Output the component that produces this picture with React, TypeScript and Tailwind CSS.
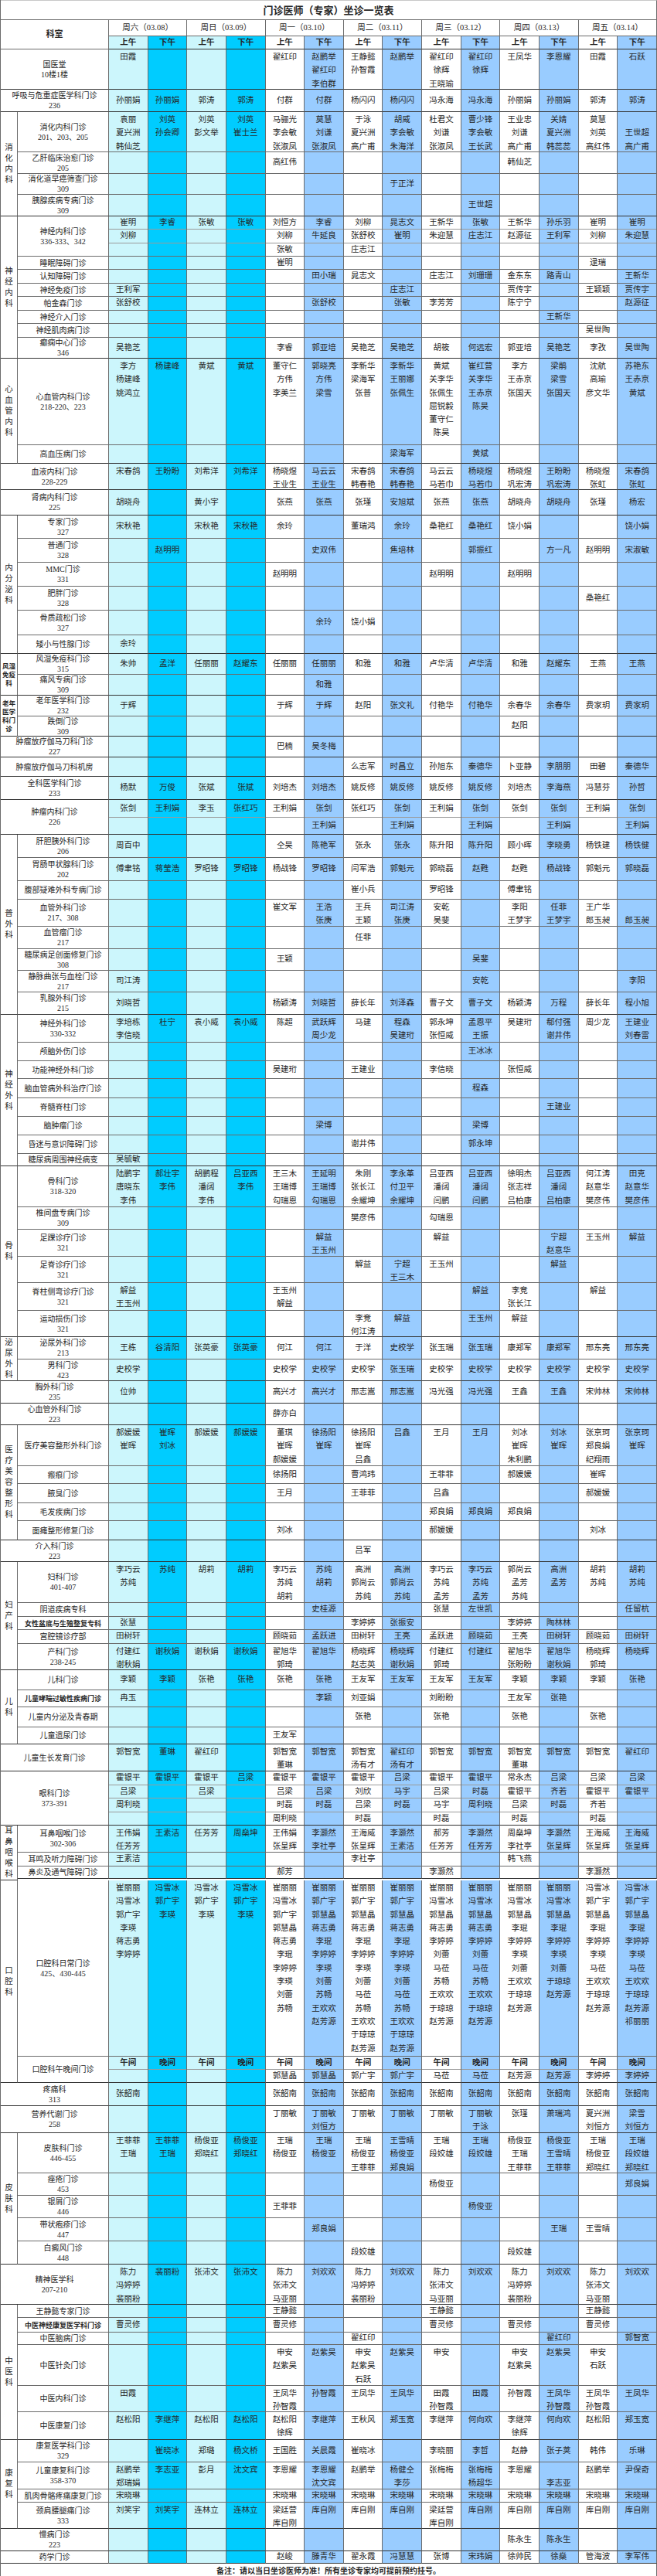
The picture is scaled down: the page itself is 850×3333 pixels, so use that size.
import React from "react"

type Row = { label: string; h: number; cells: string; split?: number; sans?: boolean; noon?: boolean }
type Section = { group?: string; gsans?: boolean; rows: Row[] }

// 周六、周日用青色，工作日下午用浅蓝
const bg = (i: number) => {
  if (i < 4) return i % 2 === 0 ? "bg-[#ccf6fc]" : "bg-[#00ccff]"
  return i % 2 === 0 ? "bg-white" : "bg-[#99ccff]"
}

const DAYS = ["周六（03.08）", "周日（03.09）", "周一（03.10）", "周二（03.11）", "周三（03.12）", "周四（03.13）", "周五（03.14）"]

const DATA: Section[] = [
  { rows: [{ label: "国医堂\n10楼1楼", h: 52, cells: "田霞||||翟红印|赵鹏举/翟红印/李伯群|王静懿/孙智霞|赵鹏举|翟红印/徐辉/王晓瑜|翟红印/徐辉|王凤华|李恩耀|田霞|石跃" }] },
  { rows: [{ label: "呼吸与危重症医学科门诊\n236", h: 29, cells: "孙丽娟|孙丽娟|郭涛|郭涛|付群|付群|杨闪闪|杨闪闪|冯永海|冯永海|孙丽娟|孙丽娟|郭涛|郭涛" }] },
  {
    group: "消化内科",
    rows: [
      { label: "消化内科门诊\n201、203、205", h: 52, cells: "袁丽/夏兴洲/韩仙芝|刘英/孙会卿|刘英/彭文举|刘英/崔士兰|马骊光/李会敏/张淑凤|莫慧/刘谦/张淑凤|于泳/夏兴洲/高广甫|胡威/李会敏/朱海洋|杜君文/刘谦/张淑凤|曹少锋/李会敏/王长武|王业忠/刘谦/高广甫|关婧/夏兴洲/韩蕊蕊|莫慧/刘英/高红伟|/王世超/高广甫" },
      { label: "乙肝临床治愈门诊\n205", h: 28, cells: "4:高红伟;10:韩仙芝" },
      { label: "消化道早癌筛查门诊\n309", h: 27, cells: "7:于正洋" },
      { label: "胰腺疾病专病门诊\n309", h: 28, cells: "9:王世超" },
    ],
  },
  {
    group: "神经内科",
    rows: [
      { label: "神经内科门诊\n336-333、342", h: 52, split: 3, cells: "崔明/刘柳|李睿|张敏|张敏|刘恒方/刘柳/张敏|李睿/牛延良|刘柳/张舒校/庄志江|晁志文/崔明|王新华/朱迎慧|张敏/庄志江|王新华/赵源征|孙乐羽/王利军|崔明/刘柳|崔明/朱迎慧" },
      { label: "睡眠障碍门诊", h: 17, cells: "4:崔明;12:逯瑞" },
      { label: "认知障碍门诊", h: 18, cells: "5:田小瑞;6:晁志文;8:庄志江;9:刘珊珊;10:金东东;11:路青山;13:王新华" },
      { label: "神经免疫门诊", h: 17, cells: "0:王利军;7:庄志江;10:贾传宇;12:王颖颖;13:贾传宇" },
      { label: "帕金森门诊", h: 18, cells: "0:张舒校;5:张舒校;7:张敏;8:李芳芳;10:陈宁宁;13:赵源征" },
      { label: "神经介入门诊", h: 17, cells: "11:王新华" },
      { label: "神经肌肉病门诊", h: 18, cells: "12:吴世陶" },
      { label: "癫痫中心门诊\n346", h: 27, cells: "0:吴艳芝;4:李睿;5:郭亚培;6:吴艳芝;7:吴艳芝;8:胡筱;9:何远宏;10:郭亚培;11:吴艳芝;12:李孜;13:吴世陶" },
    ],
  },
  {
    group: "心血管内科",
    rows: [
      { label: "心血管内科门诊\n218-220、223", h: 112, cells: "李方/杨建峰/姚鸿立|杨建峰|黄斌|黄斌|董守仁/方伟/李美兰|郭晓亮/方伟/梁雪|李新华/梁海军/张普|李新华/王丽娜/张佩生|黄斌/关李华/张佩生/屈锐毅/董守仁/陈昊|崔红营/关李华/王赤京/陈昊|李方/王赤京/张国天|梁鹃/梁雪/张国天|沈航/高瑜/彦文华|苏艳东/王赤京/黄斌" },
      { label: "高血压病门诊", h: 24, cells: "7:梁海军;9:黄斌" },
    ],
  },
  { rows: [{ label: "血液内科门诊\n228-229", h: 34, cells: "宋春鸽|王盼盼|刘希洋|刘希洋|杨晓煜/王业生|马云云/王业生|宋春鸽/韩春艳|宋春鸽/韩春艳|马云云/马若巾|杨晓煜/马若巾|杨晓煜/巩宏涛|王盼盼/巩宏涛|杨晓煜/张虹|宋春鸽/张虹" }] },
  { rows: [{ label: "肾病内科门诊\n225", h: 33, cells: "胡晓舟||黄小宇||张燕|张燕|张瑾|安旭斌|张燕|张燕|胡晓舟|胡晓舟|张瑾|杨宏" }] },
  {
    group: "内分泌科",
    rows: [
      { label: "专家门诊\n327", h: 30, cells: "宋秋艳||宋秋艳|宋秋艳|余玲||董瑞鸿|余玲|桑艳红|桑艳红|饶小娟|||饶小娟" },
      { label: "普通门诊\n328", h: 31, cells: "1:赵明明;5:史双伟;7:焦培林;9:郭振红;11:方一凡;12:赵明明;13:宋淑敏" },
      { label: "MMC门诊\n331", h: 31, cells: "4:赵明明;8:赵明明;10:赵明明" },
      { label: "肥胖门诊\n328", h: 31, cells: "12:桑艳红" },
      { label: "骨质疏松门诊\n327", h: 32, cells: "5:余玲;6:饶小娟" },
      { label: "矮小与性腺门诊", h: 24, cells: "0:余玲" },
    ],
  },
  {
    group: "风湿\n免疫\n科",
    gsans: true,
    rows: [
      { label: "风湿免疫科门诊\n315", h: 27, cells: "朱帅|孟洋|任丽丽|赵耀东|任丽丽|任丽丽|和雅|和雅|卢华清|卢华清|和雅|赵耀东|王燕|王燕" },
      { label: "痛风专病门诊\n309", h: 27, cells: "5:和雅" },
    ],
  },
  {
    group: "老年\n医学\n科门\n诊",
    gsans: true,
    rows: [
      { label: "老年医学科门诊\n232", h: 27, cells: "于辉||||于辉|于辉|赵阳|张文礼|付艳华|付艳华|余春华|余春华|费家玥|费家玥" },
      { label: "跌倒门诊\n309", h: 26, cells: "10:赵阳" },
    ],
  },
  { rows: [{ label: "肿瘤放疗伽马刀科门诊\n227", h: 27, cells: "4:巴楠;5:吴冬梅" }] },
  { rows: [{ label: "肿瘤放疗伽马刀科机房", h: 25, cells: "6:么志军;7:时昌立;8:孙旭东;9:秦德华;10:卜亚静;11:李朋朋;12:田碧;13:秦德华" }] },
  { rows: [{ label: "全科医学科门诊\n233", h: 30, cells: "杨默|万俊|张斌|张斌|刘培杰|刘培杰|姚反修|姚反修|姚反修|姚反修|刘培杰|李海燕|冯慧芬|孙哲" }] },
  { rows: [{ label: "肿瘤内科门诊\n226", h: 45, split: 2, cells: "张剑|王利娟|李玉|张红巧|王利娟|张剑/王利娟|张红巧|张剑/王利娟|王利娟|张剑/王利娟|张剑|张剑/王利娟|王利娟|张剑/王利娟" }] },
  {
    group: "普外科",
    rows: [
      { label: "肝胆胰外科门诊\n206", h: 30, cells: "周百中||||仝昊|陈艳军|张永|张永|陈升阳|陈升阳|顾小晖|李晓勇|杨铁建|杨铁健" },
      { label: "胃肠甲状腺科门诊\n202", h: 30, cells: "傅聿铭|蒋莹浩|罗昭锋|罗昭锋|杨战锋|罗昭锋|闫军浩|郭魁元|郭晓磊|赵甦|赵甦|杨战锋|郭魁元|郭晓磊" },
      { label: "腹部疑难外科专病门诊", h: 24, cells: "6:崔小兵;8:罗昭锋;10:傅聿铭" },
      { label: "血管外科门诊\n217、308", h: 35, cells: "4:崔文军;5:王浩/张庚;6:王兵/王颖;7:司江涛/张庚;8:安乾/吴斐;10:李阳/王梦宇;11:任菲/王梦宇;12:王广华/郎玉昶;13:/郎玉昶" },
      { label: "血管瘤门诊\n217", h: 29, cells: "6:任菲" },
      { label: "糖尿病足创面修复门诊\n308", h: 28, cells: "4:王颖;9:吴斐" },
      { label: "静脉曲张与血栓门诊\n217", h: 28, cells: "0:司江涛;9:安乾;13:李阳" },
      { label: "乳腺外科门诊\n215", h: 29, cells: "刘晓哲||||杨颖涛|刘晓哲|薛长年|刘泽森|曹子文|曹子文|杨颖涛|万程|薛长年|程小旭" },
    ],
  },
  {
    group: "神经外科",
    rows: [
      { label: "神经外科门诊\n330-332", h: 36, cells: "李培栋/李信晓|杜宁|袁小威|袁小威|陈超|武跃辉/周少龙|马建|程森/吴建珩|郭永坤/张恒威|孟恩平/王振|吴建珩|郗付强/谢井伟|周少龙|王建业/刘春雷" },
      { label: "颅脑外伤门诊", h: 24, cells: "9:王冰冰" },
      { label: "功能神经外科门诊", h: 23, cells: "4:吴建珩;6:王建业;8:李信晓;10:张恒威" },
      { label: "脑血管病外科治疗门诊", h: 25, cells: "9:程森" },
      { label: "脊髓脊柱门诊", h: 24, cells: "11:王建业" },
      { label: "脑肿瘤门诊", h: 24, cells: "5:梁博;9:梁博" },
      { label: "昏迷与意识障碍门诊", h: 24, cells: "6:谢井伟;9:郭永坤" },
      { label: "糖尿病周围神经病变", h: 16, cells: "0:吴毓敏" },
    ],
  },
  {
    group: "骨科",
    rows: [
      { label: "骨科门诊\n318-320", h: 53, cells: "陆鹏宇/唐晓东/李伟|郝壮宇/李伟|胡鹏程/潘阔/李伟|吕亚西/李伟|王三木/王瑞博/勾瑞恩|王延明/王瑞博/勾瑞恩|朱刚/张长江/余耀坤|李永革/付卫平/余耀坤|吕亚西/潘阔/闫鹏|吕亚西/潘阔/闫鹏|徐明杰/张志祥/吕柏康|吕亚西/潘阔/吕柏康|何江涛/赵意华/樊彦伟|田克/赵意华/樊彦伟" },
      { label: "椎间盘专病门诊\n309", h: 29, cells: "6:樊彦伟;8:勾瑞恩" },
      { label: "足踝诊疗门诊\n321", h: 35, cells: "5:解益/王玉州;8:解益;11:宁超/赵意华;12:王玉州;13:解益" },
      { label: "足脊诊疗门诊\n321", h: 34, cells: "6:解益;7:宁超/王三木;8:王玉州;11:解益" },
      { label: "脊柱侧弯诊疗门诊\n321", h: 36, cells: "0:解益/王玉州;4:王玉州/解益;9:解益;10:李竞/张长江;12:解益" },
      { label: "运动损伤门诊\n321", h: 34, cells: "6:李竞/何江涛;7:解益;9:王玉州;10:解益" },
    ],
  },
  {
    group: "泌尿外科",
    rows: [
      { label: "泌尿外科门诊\n213", h: 29, cells: "王栋|谷清阳|张英豪|张英豪|何江|何江|于洋|史校学|张玉瑞|张玉瑞|康郑军|康郑军|邢东亮|邢东亮" },
      { label: "男科门诊\n423", h: 28, cells: "史校学||||史校学|史校学|史校学|张玉瑞|史校学|史校学|史校学|史校学|史校学|史校学" },
    ],
  },
  { rows: [{ label: "胸外科门诊\n235", h: 29, cells: "位帅||||高兴才|高兴才|邢志嵩|邢志嵩|冯光强|冯光强|王鑫|王鑫|宋帅林|宋帅林" }] },
  { rows: [{ label: "心血管外科门诊\n223", h: 28, cells: "4:薛亦白" }] },
  {
    group: "医疗美容整形科",
    rows: [
      { label: "医疗美容整形外科门诊", h: 53, cells: "郝媛媛/崔晖|崔晖/刘冰|郝媛媛|郝媛媛|董琪/崔晖/郝媛媛|徐扬阳/崔晖|徐扬阳/崔晖/吕鑫|吕鑫|王月|王月|刘冰/崔晖/朱利鹏|刘冰/崔晖|张京珂/郑良娟/纪翔雨|张京珂/崔晖" },
      { label: "瘢痕门诊", h: 23, cells: "4:徐扬阳;6:曹鸿玮;8:王菲菲;10:郝媛媛;12:崔晖" },
      { label: "腋臭门诊", h: 25, cells: "4:王月;6:王菲菲;8:吕鑫;12:郝媛媛" },
      { label: "毛发疾病门诊", h: 23, cells: "8:郑良娟;9:郑良娟;10:郑良娟" },
      { label: "面瘫整形修复门诊", h: 25, cells: "4:刘冰;8:郝媛媛;12:刘冰" },
    ],
  },
  { rows: [{ label: "介入科门诊\n223", h: 28, cells: "6:吕军" }] },
  {
    group: "妇产科",
    rows: [
      { label: "妇科门诊\n401-407", h: 53, cells: "李巧云/苏纯|苏纯|胡莉|胡莉|李巧云/苏纯/胡莉|苏纯/胡莉|高洲/郭尚云/苏纯|高洲/郭尚云/苏纯|李巧云/苏纯/孟芳|李巧云/苏纯/孟芳|郭尚云/孟芳/苏纯|高洲/孟芳|胡莉/苏纯|胡莉/苏纯" },
      { label: "阴道疾病专科", h: 18, cells: "5:史桂源;8:张慧;9:左世凯;13:任留杭" },
      { label: "女性盆底与生殖整复专科", h: 17, sans: true, cells: "0:张慧;6:李婷婷;7:张振安;10:李婷婷;11:陶林林" },
      { label: "宫腔镜诊疗部", h: 18, cells: "田树轩||||顾晓茹|孟跃进|田树轩|王亮|孟跃进|顾晓茹|王亮|田树轩|顾晓茹|田树轩" },
      { label: "产科门诊\n238-245", h: 34, cells: "付建红/谢秋娟|谢秋娟|谢秋娟|谢秋娟|翟旭华/郭琦|翟旭华|杨晓辉/赵志英|杨晓辉/谢秋娟|付建红/郭琦|付建红|翟旭华/张盼盼|翟旭华/谢秋娟|杨晓辉/郭琦|杨晓辉" },
    ],
  },
  {
    group: "儿科",
    rows: [
      { label: "儿科门诊", h: 26, cells: "李颖|李颖|张艳|张艳|张艳|张艳|王友军|王友军|王友军|王友军|李颖|李颖|李颖|张艳" },
      { label: "儿童哮喘过敏性疾病门诊", h: 22, sans: true, cells: "0:冉玉;5:李颖;6:刘亚娟;8:刘盼盼;10:王友军;11:张艳" },
      { label: "儿童内分泌及青春期", h: 26, cells: "6:张艳;8:张艳;10:张艳;12:张艳" },
      { label: "儿童遗尿门诊", h: 22, cells: "4:王友军" },
    ],
  },
  { rows: [{ label: "儿童生长发育门诊", h: 35, cells: "郭智宽|董琳|翟红印||郭智宽/董琳|郭智宽|郭智宽/汤有才|翟红印/汤有才|郭智宽|郭智宽|郭智宽/董琳|郭智宽|郭智宽|翟红印" }] },
  { rows: [{ label: "眼科门诊\n373-391", h: 70, split: 4, cells: "霍银平/吕梁/周利晓|霍银平|霍银平/吕梁|吕梁|霍银平/吕梁/时磊/周利晓|霍银平/吕梁/时磊|霍银平/刘欣/吕梁/时磊|吕梁/马宇/时磊|霍银平/吕梁/马宇/时磊|霍银平/时磊/周利晓|常永杰/霍银平/吕梁/时磊|吕梁/齐若/时磊|吕梁/霍银平/齐若/时磊|吕梁/霍银平" }] },
  {
    group: "耳鼻咽喉科",
    rows: [
      { label: "耳鼻咽喉门诊\n302-306", h: 35, cells: "王伟娟/任芳芳|王素洁|任芳芳|周燊坤|王伟娟/张呈辉|李灏然/李社亭|王海威/张呈辉|李灏然/王素洁|郝芳/任芳芳|李灏然/任芳芳|周燊坤/李社亭|李灏然/张呈辉|王海威/张呈辉|王海威/张呈辉" },
      { label: "耳鸣及听力障碍门诊", h: 18, cells: "0:王素洁;6:李社亭;10:韩飞燕" },
      { label: "鼻炎及通气障碍门诊", h: 16, cells: "4:郝芳;8:李灏然;12:李灏然" },
    ],
  },
  {
    group: "口腔科",
    rows: [
      {
        label: "口腔科日常门诊\n425、430-445",
        h: 228,
        cells: [
          "崔丽丽/冯雪冰/郭广宇/李瑛/蒋志勇/李婷婷",
          "冯雪冰/郭广宇/李瑛",
          "冯雪冰/郭广宇/李瑛",
          "冯雪冰/郭广宇/李瑛",
          "崔丽丽/冯雪冰/郭广宇/郭慧晶/蒋志勇/李琨/李婷婷/李瑛/刘蕾/苏畅",
          "崔丽丽/郭广宇/郭慧晶/蒋志勇/李琨/李婷婷/李瑛/刘蕾/苏畅/王欢欢/赵芳源",
          "崔丽丽/郭广宇/郭慧晶/蒋志勇/李琨/李婷婷/李瑛/刘蕾/马莅/苏畅/王欢欢/于琼琼/赵芳源",
          "崔丽丽/郭广宇/郭慧晶/蒋志勇/李琨/李婷婷/李瑛/刘蕾/马莅/苏畅/王欢欢/于琼琼/赵芳源",
          "崔丽丽/冯雪冰/郭慧晶/蒋志勇/李婷婷/刘蕾/马莅/苏畅/王欢欢/于琼琼/赵芳源",
          "崔丽丽/冯雪冰/郭慧晶/蒋志勇/李婷婷/刘蕾/马莅/苏畅/王欢欢/于琼琼/赵芳源",
          "崔丽丽/冯雪冰/郭慧晶/李琨/李婷婷/李瑛/刘蕾/王欢欢/于琼琼/赵芳源",
          "崔丽丽/冯雪冰/郭慧晶/李琨/李婷婷/李瑛/刘蕾/于琼琼/赵芳源",
          "冯雪冰/郭广宇/郭慧晶/李琨/李婷婷/李瑛/马莅/王欢欢/于琼琼/赵芳源",
          "冯雪冰/郭广宇/郭慧晶/李琨/李婷婷/李瑛/马莅/王欢欢/于琼琼/赵芳源/祁丽丽",
        ].join("|"),
      },
      { label: "口腔科午晚间门诊", h: 34, split: 2, noon: true, cells: "4:郭慧晶;5:郭慧晶;6:郭广宇;7:郭广宇;8:马莅;9:马莅;10:赵芳源;11:赵芳源;12:李婷婷;13:李婷婷" },
    ],
  },
  { rows: [{ label: "疼痛科\n313", h: 30, cells: "张韶南||||张韶南|张韶南|张韶南|张韶南|张韶南|张韶南|张韶南|张韶南|张韶南|张韶南" }] },
  { rows: [{ label: "营养代谢门诊\n258", h: 35, cells: "4:丁丽敏;5:丁丽敏/刘恒方;6:丁丽敏;7:丁丽敏;8:丁丽敏;9:丁丽敏/于泳;10:张瑾;11:萧瑞鸿;12:夏兴洲/刘恒方;13:梁雪/刘恒方" }] },
  {
    group: "皮肤科",
    rows: [
      { label: "皮肤科门诊\n446-455", h: 52, cells: "王菲菲/王瑞|王菲菲/王瑞|杨俊亚/郑晓红|杨俊亚/郑晓红|王瑞/杨俊亚|王瑞/杨俊亚|王瑞/杨俊亚/王菲菲|王雪晴/杨俊亚/郑良娟|王瑞/段姣雄|王瑞/段姣雄|杨俊亚/王瑞/王菲菲|杨俊亚/王雪晴/王菲菲|王瑞/杨俊亚/郑晓红|王瑞/段姣雄/郑晓红" },
      { label: "痤疮门诊\n453", h: 29, cells: "8:杨俊亚;13:郑良娟" },
      { label: "银屑门诊\n446", h: 29, cells: "4:王菲菲;9:杨俊亚" },
      { label: "带状疱疹门诊\n447", h: 30, cells: "5:郑良娟;11:王瑞;12:王雪晴" },
      { label: "白癜风门诊\n448", h: 30, cells: "6:段姣雄;10:段姣雄" },
    ],
  },
  { rows: [{ label: "精神医学科\n207-210", h: 52, cells: "陈力/冯婷婷/裴丽粉|裴丽粉|张沛文|张沛文|陈力/张沛文/马亚丽|刘欢欢|陈力/冯婷婷/裴丽粉|刘欢欢|陈力/张沛文/马亚丽|刘欢欢|陈力/冯婷婷/裴丽粉|刘欢欢|陈力/张沛文/马亚丽|刘欢欢" }] },
  {
    group: "中医科",
    rows: [
      { label: "王静懿专家门诊", h: 17, cells: "4:王静懿;8:王静懿;12:王静懿" },
      { label: "中医神经康复医学科门诊", h: 19, sans: true, cells: "0:曹灵修;4:曹灵修;8:曹灵修;10:曹灵修;12:曹灵修" },
      { label: "中医脑病门诊", h: 16, cells: "6:翟红印;11:翟红印;13:郭智宽" },
      { label: "中医针灸门诊", h: 53, cells: "4:申安/赵紫昊;5:赵紫昊;6:申安/赵紫昊/石跃;7:赵紫昊;8:申安;10:申安/赵紫昊;11:赵紫昊;12:申安/石跃" },
      { label: "中医内科门诊", h: 34, cells: "0:田霞;4:王凤华/孙智霞;5:孙智霞;6:王凤华;7:王凤华;8:田霞/孙智霞;9:田霞;10:孙智霞;11:王凤华/孙智霞;12:王凤华/孙智霞;13:王凤华" },
      { label: "中医康复门诊", h: 36, cells: "赵松阳|李继萍|赵松阳|赵松阳|赵松阳/徐辉|李继萍|王秋风|郑玉宽|李继萍|何向欢|李继萍/徐辉|何向欢|赵松阳|郑玉宽" },
    ],
  },
  {
    group: "康复科",
    rows: [
      { label: "康复医学科门诊\n329", h: 29, cells: "|崔晓冰|郑璐|杨文桥|王国胜|关晨霞|崔晓冰||李晓丽|李哲|赵静|张子荚|韩伟|乐琳" },
      { label: "儿童康复科门诊\n358-370", h: 35, cells: "赵鹏举/郑瑞娟|李志亚|彭月|沈文宾|李恩耀|李恩耀/沈文宾|赵鹏举|杨健仝/李莎|张梅梅|张梅梅/杨超华|李恩耀|/李志亚|赵鹏举|尹保奇" },
      { label: "肌肉骨骼疼痛康复门诊", h: 17, cells: "宋晓琳||||宋晓琳|宋晓琳|宋晓琳|宋晓琳|宋晓琳|宋晓琳|宋晓琳|宋晓琳|宋晓琳|宋晓琳" },
      { label: "颈肩腰腿痛门诊\n333", h: 34, cells: "刘笑宇|刘笑宇|连林立|连林立|梁廷营/库自刚|库自刚|库自刚|库自刚|梁廷营/库自刚|库自刚|库自刚|库自刚|库自刚|库自刚" },
    ],
  },
  { rows: [{ label: "慢病门诊\n223", h: 29, cells: "10:陈永生;11:陈永生" }] },
  { rows: [{ label: "药学门诊", h: 16, cells: "4:赵峻;5:滕青华;6:翟永霞;7:冯慧慧;8:张博;9:宋玮娟;10:徐帅民;11:徐燊;12:管海波;13:李军伟" }] },
]

function parseCells(s: string): string[][] {
  let arr: string[] = Array(14).fill("")
  if (s.includes("|")) arr = s.split("|")
  else if (s)
    s.split(";").forEach((p) => {
      const [k, v] = p.split(":")
      arr[Number(k)] = v
    })
  return arr.map((c) => (c ? c.split("/") : []))
}

const LINE = "border-[#6b6b6b]"

function NameCell({ i, names, multi, split, noon, last }: { i: number; names: string[]; multi: boolean; split?: number; noon?: boolean; last: boolean }) {
  const base = `flex-1 min-w-0 border-r border-b ${LINE} ${last ? "border-b-[#333333]" : ""} ${bg(i)} whitespace-nowrap`

  if (split) {
    const parts = Array.from({ length: split }, (_, k) => {
      if (noon) return k === 0 ? (i % 2 === 0 ? "午间" : "晚间") : names[0] || ""
      return names[k] || ""
    })
    return (
      <div className={`${base} flex flex-col`}>
        {parts.map((p, k) => (
          <div
            key={k}
            className={`flex-1 flex items-center justify-center leading-none ${k > 0 ? "border-t border-[#9a9a9a]" : ""} ${noon && k === 0 ? "font-bold text-[10.5px]" : ""}`}
          >
            {p}
          </div>
        ))}
      </div>
    )
  }

  if (multi) {
    return (
      <div className={`${base} flex flex-col items-center pt-px leading-[17.3px]`}>
        {names.map((n, k) => (
          <div key={k}>{n || "\u00a0"}</div>
        ))}
      </div>
    )
  }

  return <div className={`${base} flex items-center justify-center leading-none`}>{names[0] || ""}</div>
}

function TableRow({ row, wide, last }: { row: Row; wide: boolean; last: boolean }) {
  const cells = parseCells(row.cells)
  const multi = cells.some((c) => c.length > 1)
  const lines = row.label.split("\n")

  return (
    <div className="flex" style={{ height: row.h }}>
      <div
        className={`${wide ? "w-[140px]" : "w-[118px]"} shrink-0 border-r border-b ${LINE} ${last ? "border-b-[#333333]" : ""} flex flex-col items-center justify-center text-center ${
          row.sans ? "font-['Noto_Sans_CJK_SC',sans-serif] font-bold text-[9px] leading-none" : "text-[10px] leading-[13px]"
        } whitespace-nowrap`}
      >
        {lines.map((l, k) => (
          <div key={k}>{l}</div>
        ))}
      </div>
      {cells.map((names, i) => (
        <NameCell key={i} i={i} names={names} multi={multi} split={row.split} noon={row.noon} last={last} />
      ))}
    </div>
  )
}

function SectionView({ section }: { section: Section }) {
  if (!section.group) {
    return <TableRow row={section.rows[0]} wide last />
  }

  const groupLines = section.gsans ? section.group.split("\n") : section.group.split("")

  return (
    <div className="flex">
      <div
        className={`w-[22px] shrink-0 border-r border-b ${LINE} border-b-[#333333] flex flex-col items-center justify-center ${
          section.gsans ? "font-['Noto_Sans_CJK_SC',sans-serif] font-bold text-[8.5px] leading-[11px]" : "text-[10.5px] leading-[14px]"
        }`}
      >
        {groupLines.map((c, k) => (
          <div key={k}>{c}</div>
        ))}
      </div>
      <div className="flex-1 flex flex-col">
        {section.rows.map((r, k) => (
          <TableRow key={k} row={r} wide={false} last={k === section.rows.length - 1} />
        ))}
      </div>
    </div>
  )
}

export default function App() {
  return (
    <div className="w-[850px] bg-white text-[#262626] text-[10.5px] font-['Liberation_Serif','Noto_Sans_CJK_SC',serif]">
      <div className="border-l border-[#6b6b6b]">
        {/* 标题 */}
        <div className="h-[26px] border-t border-r border-b border-t-[#c8c8c8] border-r-[#6b6b6b] border-b-[#6b6b6b] flex items-center justify-center font-['Noto_Sans_CJK_SC',sans-serif] font-bold text-[13px]">
          门诊医师（专家）坐诊一览表
        </div>

        {/* 表头 */}
        <div className="flex h-[38px]">
          <div className={`w-[140px] shrink-0 border-r border-b ${LINE} flex items-center justify-center font-bold text-[11px]`}>科室</div>
          <div className="flex-1 flex flex-col">
            <div className="flex h-[21px]">
              {DAYS.map((d) => (
                <div key={d} className={`flex-1 min-w-0 border-r border-b ${LINE} flex items-center justify-center whitespace-nowrap`}>
                  {d}
                </div>
              ))}
            </div>
            <div className="flex h-[17px]">
              {Array.from({ length: 14 }, (_, i) => (
                <div key={i} className={`flex-1 min-w-0 border-r border-b ${LINE} border-b-[#333333] ${bg(i)} flex items-center justify-center font-bold`}>
                  {i % 2 === 0 ? "上午" : "下午"}
                </div>
              ))}
            </div>
          </div>
        </div>

        {DATA.map((s, k) => (
          <SectionView key={k} section={s} />
        ))}

        {/* 备注 */}
        <div className="h-[18px] border-r border-b border-r-[#6b6b6b] border-b-[#c8c8c8] flex items-center justify-center font-['Noto_Sans_CJK_SC',sans-serif] font-bold text-[10px]">
          备注：请以当日坐诊医师为准！所有坐诊专家均可提前预约挂号。
        </div>
      </div>
    </div>
  )
}
